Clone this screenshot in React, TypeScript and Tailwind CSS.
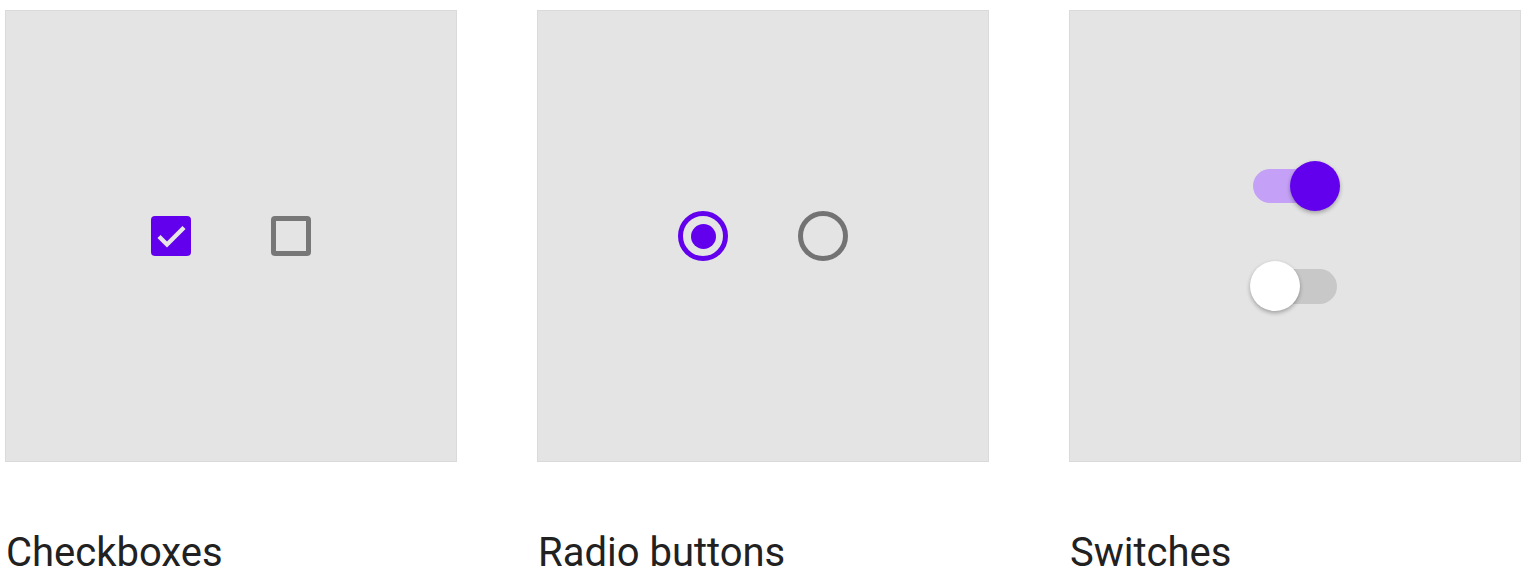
import { FC, ReactNode } from 'react';

const Card: FC<{ title: string; children: ReactNode }> = ({ title, children }) => (
  <div className="flex flex-col">
    <div className="w-[452px] h-[452px] bg-[#e4e4e4] border border-[#dadada] flex items-center justify-center">
      {children}
    </div>
    <div className="mt-[71px] text-[40px] leading-[40px] text-[#212121] font-['Roboto',sans-serif] pl-px whitespace-nowrap">
      {title}
    </div>
  </div>
);

const Switch: FC<{ on: boolean }> = ({ on }) => (
  <div className="relative w-[90px] h-[50px] flex items-center">
    <div
      className={
        on
          ? 'mx-[3px] w-[84px] h-[34px] rounded-full bg-[#c4a1f6]'
          : 'mx-[3px] w-[84px] h-[35px] rounded-full bg-[#c8c8c8]'
      }
    />
    <div
      className={
        on
          ? 'absolute top-0 right-0 w-[50px] h-[50px] rounded-full bg-[#6200ee] shadow-[0_2px_4px_rgba(0,0,0,0.3)]'
          : 'absolute top-0 left-0 w-[50px] h-[50px] rounded-full bg-white shadow-[0_2px_4px_rgba(0,0,0,0.3)]'
      }
    />
  </div>
);

export default function App() {
  return (
    <div className="w-[1533px] h-[578px] bg-white overflow-hidden pl-[5px] pt-[10px] font-['Roboto',sans-serif]">
      <div className="flex gap-[80px]">
        <Card title="Checkboxes">
          <div className="flex items-center gap-[80px]">
            <div className="w-[40px] h-[40px] rounded-[4px] bg-[#6200ee] flex items-center justify-center">
              <svg width="40" height="40" viewBox="0 0 40 40">
                <polyline
                  points="8,20.5 16,28.5 33,11.5"
                  fill="none"
                  stroke="#e6e6e6"
                  strokeWidth="4.4"
                />
              </svg>
            </div>
            <div className="w-[40px] h-[40px] rounded-[4px] border-[5px] border-[#777777]" />
          </div>
        </Card>
        <Card title="Radio buttons">
          <div className="flex items-center gap-[70px]">
            <div className="w-[50px] h-[50px] rounded-full border-[5px] border-[#6200ee] flex items-center justify-center">
              <div className="w-[25px] h-[25px] rounded-full bg-[#6200ee]" />
            </div>
            <div className="w-[50px] h-[50px] rounded-full border-[5px] border-[#737373]" />
          </div>
        </Card>
        <Card title="Switches">
          <div className="flex flex-col items-center gap-[50px]">
            <Switch on />
            <Switch on={false} />
          </div>
        </Card>
      </div>
    </div>
  );
}
